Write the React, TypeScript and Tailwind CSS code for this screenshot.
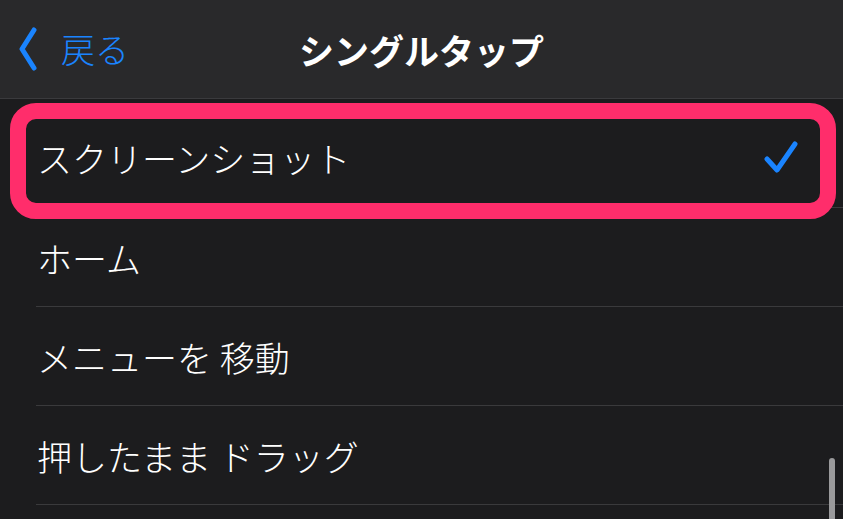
import React from "react";

const rows = ["ホーム", "メニューを 移動", "押したまま ドラッグ"];

const font = { fontFamily: '"Noto Sans CJK JP", "Noto Sans", sans-serif' };

const App = () => {
  return (
    <div
      className="relative w-[843px] h-[519px] overflow-hidden bg-[#1c1c1e] text-white"
      style={font}
    >
      {/* Nav bar */}
      <div className="relative h-[99px] bg-[#29292b] border-b border-[#3a3a3d] flex items-center">
        <div className="flex items-center pl-[19px] text-[#1a84ff]">
          <svg width="20" height="44" viewBox="0 0 20 44" fill="none">
            <polyline
              points="15,3 3,22 15,41"
              stroke="#1a84ff"
              strokeWidth="5"
              strokeLinecap="round"
              strokeLinejoin="round"
            />
          </svg>
          <span className="ml-[22px] text-[34px] font-light leading-none">戻る</span>
        </div>
        <h1 className="absolute left-0 right-0 text-center text-[35px] font-bold leading-none">
          シングルタップ
        </h1>
      </div>

      {/* List */}
      <div className="pt-[9px]">
        <div className="relative h-[99px] flex items-center pl-[37px] pr-[44px]">
          <span className="flex-1 text-[35px] font-light leading-none">スクリーンショット</span>
          <svg width="36" height="34" viewBox="0 0 36 34" fill="none">
            <polyline
              points="4,18 14,29 32,3"
              stroke="#1a84ff"
              strokeWidth="5"
              strokeLinecap="round"
              strokeLinejoin="round"
            />
          </svg>
        </div>
        {rows.map((row, i) => (
          <div key={i} className="pl-[36px]">
            <div className="h-[99px] border-t border-[#3a3a3c] flex items-center pl-[1px]">
              <span className="text-[35px] font-light leading-none">{row}</span>
            </div>
          </div>
        ))}
        <div className="ml-[36px] border-t border-[#3a3a3c]" />
      </div>

      {/* Highlight annotation */}
      <div className="absolute left-[10px] right-[7px] top-[103px] h-[116px] rounded-[26px] border-[16px] border-[#ff2d6b]" />

      {/* Scroll indicator */}
      <div className="absolute left-[829px] top-[458px] w-[6px] h-[80px] rounded-full bg-[#9a9a9c]" />
    </div>
  );
};

export default App;
